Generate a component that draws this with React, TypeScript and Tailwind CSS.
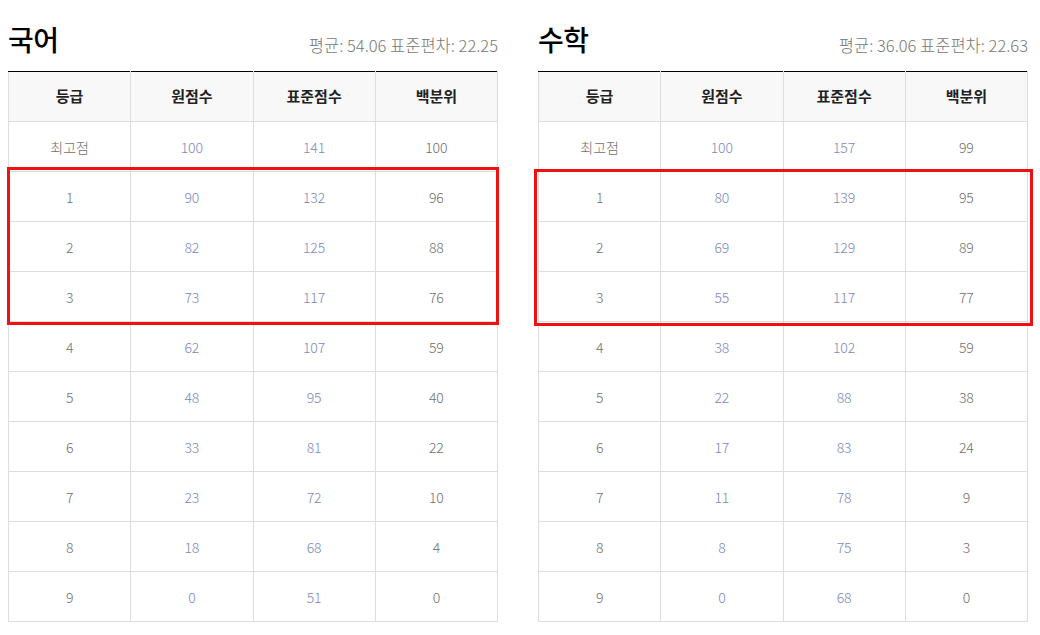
import React from "react";

type Row = [string, string, string, string];

const kor: Row[] = [
  ["최고점", "100", "141", "100"],
  ["1", "90", "132", "96"],
  ["2", "82", "125", "88"],
  ["3", "73", "117", "76"],
  ["4", "62", "107", "59"],
  ["5", "48", "95", "40"],
  ["6", "33", "81", "22"],
  ["7", "23", "72", "10"],
  ["8", "18", "68", "4"],
  ["9", "0", "51", "0"],
];

const math: Row[] = [
  ["최고점", "100", "157", "99"],
  ["1", "80", "139", "95"],
  ["2", "69", "129", "89"],
  ["3", "55", "117", "77"],
  ["4", "38", "102", "59"],
  ["5", "22", "88", "38"],
  ["6", "17", "83", "24"],
  ["7", "11", "78", "9"],
  ["8", "8", "75", "3"],
  ["9", "0", "68", "0"],
];

function Panel({
  title,
  stats,
  rows,
  box,
}: {
  title: string;
  stats: string;
  rows: Row[];
  box: string;
}) {
  return (
    <div className="w-[490px] relative">
      <div className="h-[71px] flex items-end justify-between pb-[15px]">
        <h2 className="text-[28px] leading-none font-medium text-black tracking-[-0.5px] mb-[3px]">{title}</h2>
        <span className="text-[16.5px] leading-none font-light text-[#777] mb-[3px]">{stats}</span>
      </div>
      <table className="w-full border-collapse table-fixed border-t border-t-black">
        <thead>
          <tr className="h-[50px] bg-[#f8f8f8]">
            {["등급", "원점수", "표준점수", "백분위"].map((h) => (
              <th
                key={h}
                className="border border-[#dddddd] border-t-black text-[15px] font-bold text-[#222]"
              >
                {h}
              </th>
            ))}
          </tr>
        </thead>
        <tbody>
          {rows.map((r, i) => (
            <tr key={i} className="h-[50px]">
              <td className="border border-[#dddddd] text-center text-[14px] font-light text-[#6f6f6f] pt-[2px]">{r[0]}</td>
              <td className="border border-[#dddddd] text-center text-[14px] font-light text-[#7c88bb] pt-[2px]">{r[1]}</td>
              <td className="border border-[#dddddd] text-center text-[14px] font-light text-[#7c88bb] pt-[2px]">{r[2]}</td>
              <td className="border border-[#dddddd] text-center text-[14px] font-light text-[#6f6f6f] pt-[2px]">{r[3]}</td>
            </tr>
          ))}
        </tbody>
      </table>
      <div className={`absolute border-[3px] border-[#ee1111] pointer-events-none ${box}`} />
    </div>
  );
}

export default function App() {
  return (
    <div
      className="w-[1040px] h-[635px] bg-white flex gap-[40px] pl-[8px]"
      style={{ fontFamily: '"Noto Sans CJK KR", "Noto Sans", sans-serif' }}
    >
      <Panel
        title="국어"
        stats="평균: 54.06 표준편차: 22.25"
        rows={kor}
        box="left-[-1px] top-[167px] w-[492px] h-[158px]"
      />
      <Panel
        title="수학"
        stats="평균: 36.06 표준편차: 22.63"
        rows={math}
        box="left-[-4px] top-[169px] w-[499px] h-[157px]"
      />
    </div>
  );
}
